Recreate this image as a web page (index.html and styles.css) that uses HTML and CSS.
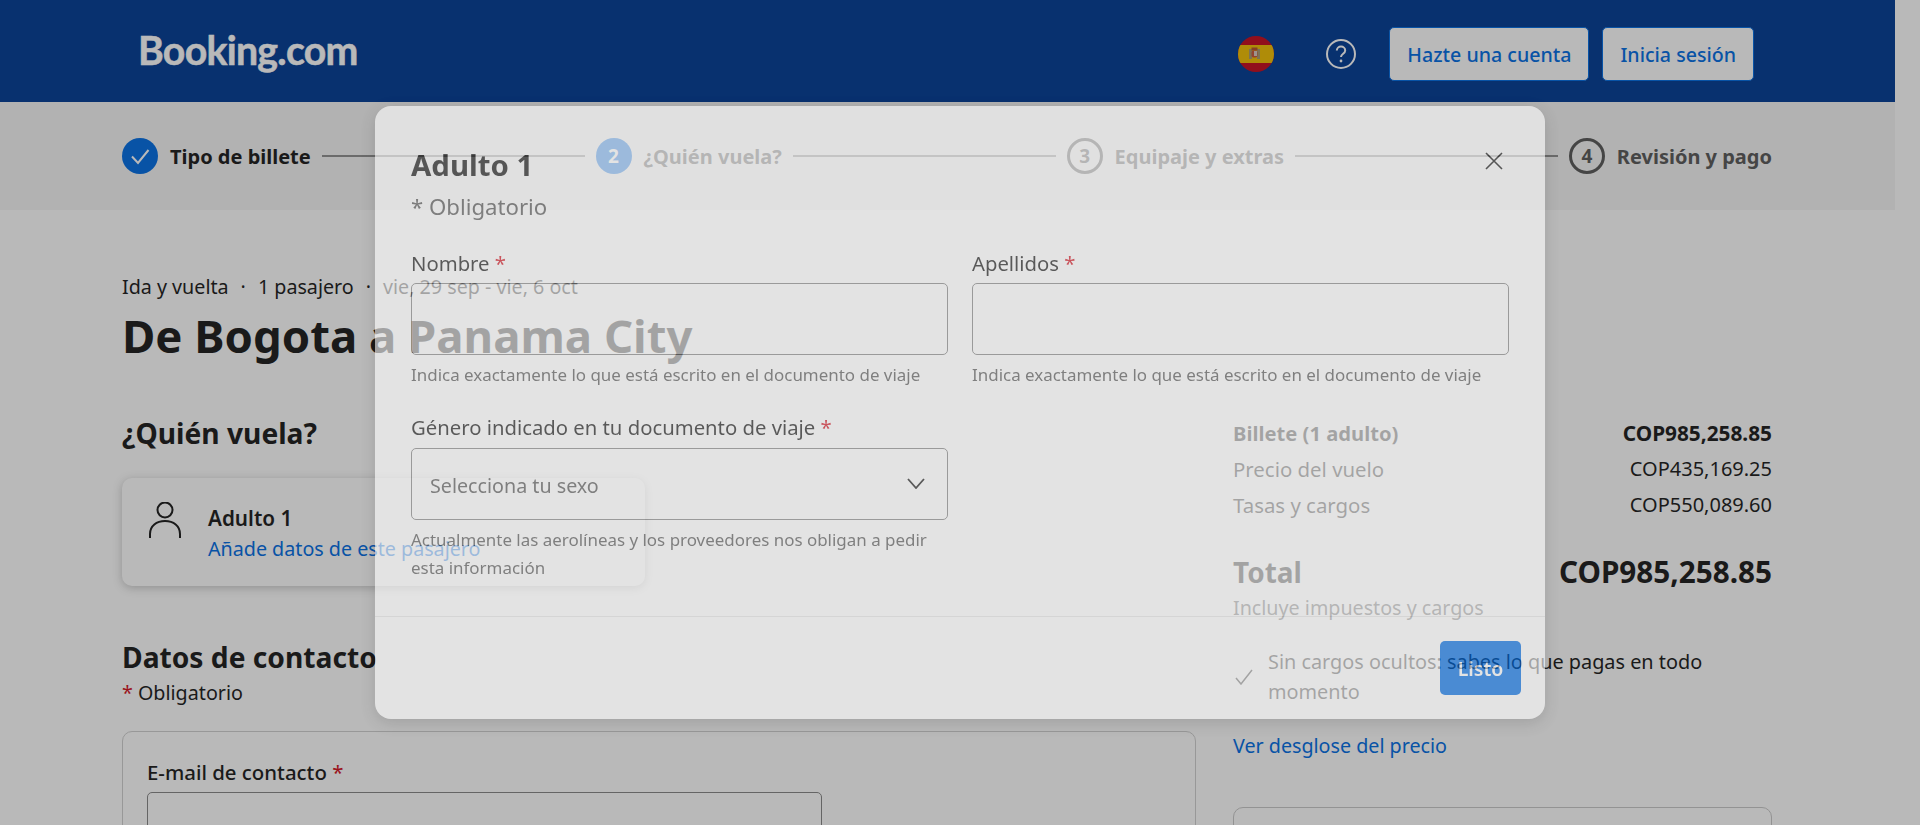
FILE: index.html
```html
<!DOCTYPE html>
<html lang="es">
<head>
    <meta charset="utf-8">
    <title>Booking.com</title>
    <link rel="stylesheet" href="styles.css">
</head>
<body>
<div class="page">
    <!-- Top bar -->
    <header class="topbar">
        <div class="logo">Booking.com</div>
        <svg class="flag" viewBox="0 0 36 36" aria-label="es">
            <clipPath id="flagClip"><circle cx="18" cy="18" r="18"/></clipPath>
            <g clip-path="url(#flagClip)">
                <rect width="36" height="36" fill="#c60b1e"/>
                <rect y="9" width="36" height="18" fill="#f1bf00"/>
                <rect x="11" y="13" width="3" height="10" fill="#a89a70"/>
                <rect x="19" y="13" width="3" height="10" fill="#a89a70"/>
                <rect x="13.5" y="11.5" width="6" height="3" fill="#b5532a"/>
                <rect x="13.5" y="14.5" width="6" height="7" rx="2" fill="#c8563a"/>
                <rect x="16" y="15" width="3" height="5" fill="#d8c8c0"/>
            </g>
        </svg>
        <svg class="help" viewBox="0 0 30 30" aria-label="Ayuda">
            <circle cx="15" cy="15" r="14" fill="none" stroke="#fff" stroke-width="2"/>
            <path d="M10.8 11.6c0-2.4 1.9-4 4.2-4s4.2 1.6 4.2 3.8c0 3.2-4.2 3.4-4.2 6.6" fill="none" stroke="#fff" stroke-width="2"/>
            <circle cx="15" cy="22" r="1.4" fill="#fff"/>
        </svg>
        <button class="top-btn top-btn-first">Hazte una cuenta</button>
        <button class="top-btn">Inicia sesión</button>
    </header>

    <!-- Steps -->
    <div class="steps">
        <div class="step-dot step-done">
            <svg viewBox="0 0 36 36" width="36" height="36"><path d="M10 18.5l6 6.5 10.5-13" fill="none" stroke="#fff" stroke-width="2"/></svg>
        </div>
        <span class="step-label step-label-done">Tipo de billete</span>
        <div class="step-line"></div>
        <div class="step-dot step-current">2</div>
        <span class="step-label">¿Quién vuela?</span>
        <div class="step-line"></div>
        <div class="step-dot">3</div>
        <span class="step-label">Equipaje y extras</span>
        <div class="step-line"></div>
        <div class="step-dot">4</div>
        <span class="step-label">Revisión y pago</span>
    </div>

    <main class="content">
        <p class="trip-meta">Ida y vuelta<span class="sep">·</span>1 pasajero<span class="sep">·</span>vie, 29 sep - vie, 6 oct</p>
        <h1 class="trip-title">De Bogota a Panama City</h1>

        <div class="columns">
            <section class="col-left">
                <h2 class="section-title">¿Quién vuela?</h2>
                <div class="passenger-card">
                    <svg class="person" viewBox="0 0 32 36">
                        <circle cx="16" cy="8" r="7.5" fill="none" stroke="#1a1a1a" stroke-width="2"/>
                        <path d="M1 36v-4c0-8 6.500-13 15-13s15 5 15 13v4" fill="none" stroke="#1a1a1a" stroke-width="2"/>
                    </svg>
                    <div>
                        <div class="passenger-name">Adulto 1</div>
                        <a class="link">Añade datos de este pasajero</a>
                    </div>
                </div>

                <h2 class="section-title contact-title">Datos de contacto</h2>
                <p class="required-note"><span class="req">*</span> Obligatorio</p>
                <div class="contact-box">
                    <label class="contact-label">E-mail de contacto <span class="req">*</span></label>
                    <div class="contact-input"></div>
                </div>
            </section>

            <aside class="col-right">
                <div class="price-row price-strong"><span>Billete (1 adulto)</span><span class="price-strong-amount">COP985,258.85</span></div>
                <div class="price-row"><span>Precio del vuelo</span><span class="price-amount">COP435,169.25</span></div>
                <div class="price-row"><span>Tasas y cargos</span><span class="price-amount">COP550,089.60</span></div>
                <div class="price-total"><span>Total</span><span class="total-amount">COP985,258.85</span></div>
                <p class="price-note">Incluye impuestos y cargos</p>
                <div class="no-fees">
                    <svg class="no-fees-icon" viewBox="0 0 18 16"><path d="M1 9l5 6L17 1" fill="none" stroke="#1a1a1a" stroke-width="1.500"/></svg>
                    <span>Sin cargos ocultos: sabes lo que pagas en todo momento</span>
                </div>
                <a class="link breakdown">Ver desglose del precio</a>
                <div class="side-box"></div>
            </aside>
        </div>
    </main>
</div>

<!-- Dimmed layer and dialog -->
<div class="overlay">
    <div class="modal">
        <svg class="modal-close" viewBox="0 0 18 18"><path d="M1 1l16 16M17 1L1 17" fill="none" stroke="#1a1a1a" stroke-width="1.600"/></svg>
        <div class="modal-body">
            <h2 class="modal-title">Adulto 1</h2>
            <p class="modal-note">* Obligatorio</p>
            <div class="form-grid">
                <div class="field">
                    <label class="field-label">Nombre <span class="req">*</span></label>
                    <div class="field-box"></div>
                    <p class="field-help">Indica exactamente lo que está escrito en el documento de viaje</p>
                </div>
                <div class="field">
                    <label class="field-label">Apellidos <span class="req">*</span></label>
                    <div class="field-box"></div>
                    <p class="field-help">Indica exactamente lo que está escrito en el documento de viaje</p>
                </div>
                <div class="field">
                    <label class="field-label">Género indicado en tu documento de viaje <span class="req">*</span></label>
                    <div class="field-box field-select">
                        <span>Selecciona tu sexo</span>
                        <svg class="chevron" viewBox="0 0 18 11"><path d="M1 1l8 9 8-9" fill="none" stroke="#1a1a1a" stroke-width="1.800"/></svg>
                    </div>
                    <p class="field-help field-help-tall">Actualmente las aerolíneas y los proveedores nos obligan a pedir esta información</p>
                </div>
            </div>
        </div>
        <div class="modal-footer">
            <button class="done-btn">Listo</button>
        </div>
    </div>
</div>
</body>
</html>
```

FILE: styles.css
```css
* {
    box-sizing: border-box;
}

html, body {
    margin: 0;
    height: 100%;
    overflow: hidden;
}

body {
    background: #fff;
    color: #1a1a1a;
    font-family: "Noto Sans", "Liberation Sans", sans-serif;
    font-size: 19.7px;
    line-height: 30px;
}

p, h1, h2 {
    margin: 0;
}

.page {
    width: 1895px;
}

/* Top bar */
.topbar {
    height: 102px;
    background: #003b95;
    display: flex;
    align-items: center;
    padding: 6px 141px 0 138px;
}

.logo {
    font-family: Lato, sans-serif;
    font-weight: 700;
    font-size: 39.2px;
    letter-spacing: -0.7px;
    line-height: 40px;
    color: #fff;
    -webkit-text-stroke: 0.5px #fff;
    margin-top: -8px;
    margin-right: auto;
}

.flag {
    width: 36px;
    height: 36px;
}

.help {
    width: 30px;
    height: 30px;
    margin-left: 52px;
}

.top-btn {
    height: 54px;
    padding: 0 17px;
    background: #fff;
    border: 1px solid #006ce4;
    border-radius: 5px;
    color: #006ce4;
    font: 500 19.6px "Noto Sans", sans-serif;
    margin-left: 13px;
}

.top-btn-first {
    margin-left: 33px;
}

/* Steps */
.steps {
    height: 108px;
    background: #f5f5f5;
    display: flex;
    align-items: center;
    padding: 0 123px 0 122px;
    color: #595959;
}

.step-dot {
    width: 36px;
    height: 36px;
    flex: none;
    border: 3px solid #595959;
    border-radius: 50%;
    display: flex;
    align-items: center;
    justify-content: center;
    font-weight: 700;
    font-size: 19px;
}

.step-done, .step-current {
    background: #006ce4;
    border: none;
    color: #fff;
}

.step-label {
    font-weight: 700;
    font-size: 20px;
    margin-left: 12px;
    padding-top: 2px;
    white-space: nowrap;
}

.step-label-done {
    color: #1a1a1a;
}

.step-line {
    flex: 1;
    height: 2px;
    background: #8f8f8f;
    margin: 0 11px;
}

/* Page content */
.content {
    padding: 62px 123px 0 122px;
}

.trip-meta {
    line-height: 30px;
}

.sep {
    margin: 0 12px;
}

.trip-title {
    font-size: 45.5px;
    font-weight: 700;
    line-height: 46px;
    margin-top: 10px;
}

.columns {
    display: grid;
    grid-template-columns: 1074px 539px;
    gap: 37px;
    margin-top: 56px;
}

.section-title {
    font-size: 28.2px;
    font-weight: 700;
    line-height: 38px;
    padding-bottom: 2px;
}

.passenger-card {
    height: 108px;
    margin-top: 24px;
    width: 523px;
    background: #fff;
    border-radius: 10px;
    box-shadow: 0 2px 10px rgba(26, 26, 26, 0.25);
    display: flex;
    align-items: flex-start;
    gap: 27px;
    padding: 24px 27px;
}

.person {
    width: 32px;
    height: 36px;
    flex: none;
}

.passenger-name {
    font-size: 20.7px;
    font-weight: 600;
    line-height: 32px;
}

.link {
    color: #006ce4;
}

.contact-title {
    margin-top: 52px;
}

.required-note {
    line-height: 30px;
}

.req {
    color: #d4111e;
    font-weight: 400;
}

.contact-box {
    margin-top: 23px;
    height: 260px;
    border: 1px solid #d0d0d0;
    border-radius: 10px;
    padding: 25px 24px 0;
}

.contact-label {
    display: block;
    font-size: 20.4px;
    font-weight: 500;
    line-height: 30px;
}

.contact-input {
    margin-top: 5px;
    width: 675px;
    height: 72px;
    border: 1px solid #868686;
    border-radius: 5px;
}

.col-right {
    padding-top: 1px;
}

.price-row {
    display: flex;
    justify-content: space-between;
    font-size: 20.4px;
    line-height: 36px;
}

.price-amount {
    font-size: 20px;
}

.price-strong {
    font-size: 20.2px;
    font-weight: 700;
}

.price-strong-amount {
    font-size: 20.8px;
}

.price-total {
    display: flex;
    justify-content: space-between;
    align-items: baseline;
    font-size: 28px;
    font-weight: 700;
    line-height: 40px;
    margin-top: 29px;
}

.total-amount {
    font-size: 29.7px;
}

.price-note {
    margin-top: 1px;
    color: #595959;
}

.no-fees {
    margin-top: 24px;
    display: flex;
    align-items: center;
    gap: 15px;
    padding-left: 2px;
    width: 480px;
    font-size: 19.85px;
}

.no-fees-icon {
    width: 18px;
    height: 16px;
    flex: none;
}

.breakdown {
    display: block;
    margin-top: 24px;
}

.side-box {
    margin-top: 46px;
    height: 200px;
    border: 1px solid #c8c8c8;
    border-radius: 10px;
}

/* Dimmed layer and dialog */
.overlay {
    position: fixed;
    inset: 0;
    background: rgba(26, 26, 26, 0.306);
    display: flex;
    align-items: center;
    justify-content: center;
}

.modal {
    position: relative;
    width: 1170px;
    height: 613px;
    background: #fff;
    border-radius: 16px;
    opacity: 0.6;
    box-shadow: 0 4px 16px rgba(26, 26, 26, 0.25);
    display: flex;
    flex-direction: column;
}

.modal-close {
    position: absolute;
    top: 46px;
    right: 42px;
    width: 18px;
    height: 18px;
}

.modal-body {
    flex: 1;
    padding: 39px 36px 0;
}

.modal-title {
    font-size: 29.4px;
    font-weight: 700;
    line-height: 40px;
}

.modal-note {
    margin-top: 7px;
    font-size: 22.2px;
    color: #595959;
}

.form-grid {
    display: grid;
    grid-template-columns: 537px 537px;
    column-gap: 24px;
    row-gap: 26px;
    margin-top: 27px;
}

.field-label {
    display: block;
    font-size: 20.3px;
    line-height: 28px;
    padding-bottom: 2px;
}

.field-box {
    margin-top: 4px;
    height: 72px;
    border: 1px solid #868686;
    border-radius: 5px;
}

.field-select {
    margin-top: 5px;
    display: flex;
    align-items: center;
    justify-content: space-between;
    padding: 4px 22px 0 18px;
    color: #595959;
}

.chevron {
    width: 18px;
    height: 11px;
    margin-top: -6px;
}

.field-help {
    margin-top: 8px;
    font-size: 16.95px;
    line-height: 24px;
    color: #595959;
}

.field-help-tall {
    margin-top: 6px;
    line-height: 28px;
}

.modal-footer {
    border-top: 1px solid #e7e7e7;
    padding: 24px;
    display: flex;
    justify-content: flex-end;
}

.done-btn {
    width: 81px;
    height: 54px;
    background: #006ce4;
    border: none;
    border-radius: 5px;
    color: #fff;
    font: 600 19.5px "Noto Sans", sans-serif;
}
```
